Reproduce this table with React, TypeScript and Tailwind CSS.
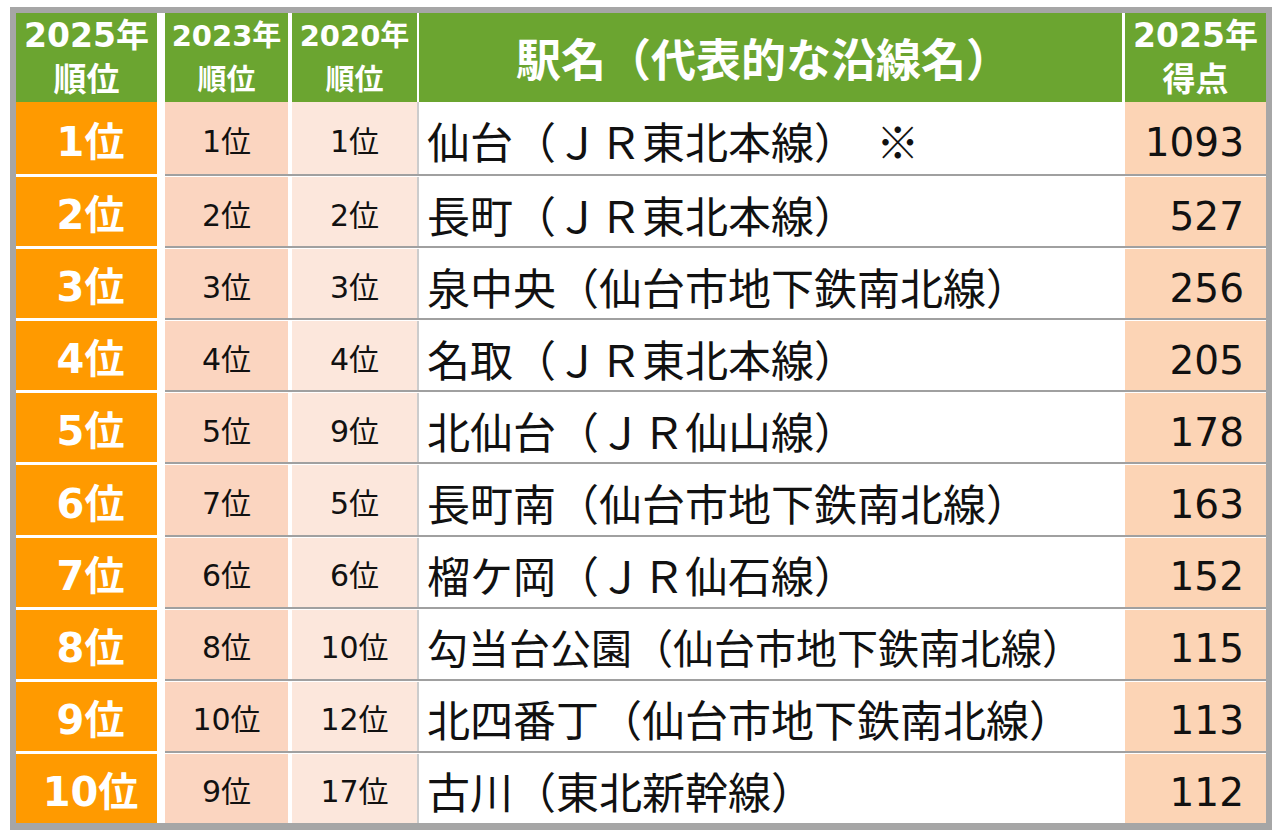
import React from 'react';

const latin = { fontFamily: '"DejaVu Sans", "Noto Sans CJK JP", sans-serif' };
const cjk = { fontFamily: '"Noto Sans CJK JP", sans-serif' };

const rows = [
    ['1位', '1位', '1位', '仙台（ＪＲ東北本線）  ※', '1093'],
    ['2位', '2位', '2位', '長町（ＪＲ東北本線）', '527'],
    ['3位', '3位', '3位', '泉中央（仙台市地下鉄南北線）', '256'],
    ['4位', '4位', '4位', '名取（ＪＲ東北本線）', '205'],
    ['5位', '5位', '9位', '北仙台（ＪＲ仙山線）', '178'],
    ['6位', '7位', '5位', '長町南（仙台市地下鉄南北線）', '163'],
    ['7位', '6位', '6位', '榴ケ岡（ＪＲ仙石線）', '152'],
    ['8位', '8位', '10位', '勾当台公園（仙台市地下鉄南北線）', '115'],
    ['9位', '10位', '12位', '北四番丁（仙台市地下鉄南北線）', '113'],
    ['10位', '9位', '17位', '古川（東北新幹線）', '112'],
];

function YearHead({ year, label, small }: { year: string; label: string; small?: boolean }) {
    return (
        <div
            className={`flex flex-col items-center justify-center font-bold text-white leading-[44px] ${small ? 'text-[29px]' : 'text-[33px]'}`}
            style={latin}
        >
            <span>{year}</span>
            <span>{label}</span>
        </div>
    );
}

export default function App() {
    return (
        <div className="w-[1280px] h-[840px] bg-white">
            <div className="ml-[10px] pt-[7px]">
                <div className="w-[1262px] h-[823px] bg-[#a6a6a6] pt-[6px] px-[6px] pb-[7px]">
                    <div className="flex flex-col h-full bg-white">
                        {/* header */}
                        <div className="flex h-[89px] shrink-0">
                            <div className="w-[141px] bg-[#6ba530] flex items-center justify-center">
                                <YearHead year="2025年" label="順位" />
                            </div>
                            <div className="w-[8px]" />
                            <div className="w-[123px] bg-[#6ba530] flex items-center justify-center">
                                <YearHead year="2023年" label="順位" small />
                            </div>
                            <div className="w-[4px]" />
                            <div className="w-[125px] bg-[#6ba530] flex items-center justify-center">
                                <YearHead year="2020年" label="順位" small />
                            </div>
                            <div className="w-[2px]" />
                            <div
                                className="w-[703px] bg-[#6ba530] flex items-center justify-center pr-[14px] text-[45px] font-bold text-white leading-none"
                                style={cjk}
                            >
                                駅名（代表的な沿線名）
                            </div>
                            <div className="w-[3px]" />
                            <div className="w-[141px] bg-[#6ba530] flex items-center justify-center">
                                <YearHead year="2025年" label="得点" />
                            </div>
                        </div>

                        {/* rows */}
                        {rows.map((r, i) => (
                            <div key={i} className="flex flex-1 min-h-0">
                                <div
                                    className={`w-[141px] bg-[#ff9a00] flex items-center justify-center pl-[8px] pt-[7px] text-[40px] font-bold text-white leading-none ${i > 0 ? 'mt-[3px]' : ''}`}
                                    style={latin}
                                >
                                    {r[0]}
                                </div>
                                <div className="w-[8px]" />
                                <div className={`flex flex-1 ${i > 0 ? 'border-t-2 border-[#a0a0a0] pt-px' : ''}`}>
                                    <div
                                        className="w-[123px] bg-[#fbd5c0] flex items-center justify-center pt-[8px] text-[30px] text-[#111] leading-none"
                                        style={latin}
                                    >
                                        {r[1]}
                                    </div>
                                    <div className="w-[4px]" />
                                    <div
                                        className="w-[125px] bg-[#fce7dc] flex items-center justify-center pt-[8px] text-[30px] text-[#111] leading-none"
                                        style={latin}
                                    >
                                        {r[2]}
                                    </div>
                                    <div className="w-[2px] bg-[#cccccc]" />
                                    <div
                                        className={`w-[703px] flex items-center pl-[8px] pt-[5px] text-[#111] leading-none whitespace-pre ${i === 7 ? 'text-[41px]' : 'text-[43px]'}`}
                                        style={cjk}
                                    >
                                        {r[3]}
                                    </div>
                                    <div className="w-[3px]" />
                                    <div
                                        className="w-[141px] bg-[#fcd4b5] flex items-center justify-end pr-[22px] pt-[9px] text-[39px] text-[#111] leading-none"
                                        style={latin}
                                    >
                                        {r[4]}
                                    </div>
                                </div>
                            </div>
                        ))}
                    </div>
                </div>
            </div>
        </div>
    );
}
